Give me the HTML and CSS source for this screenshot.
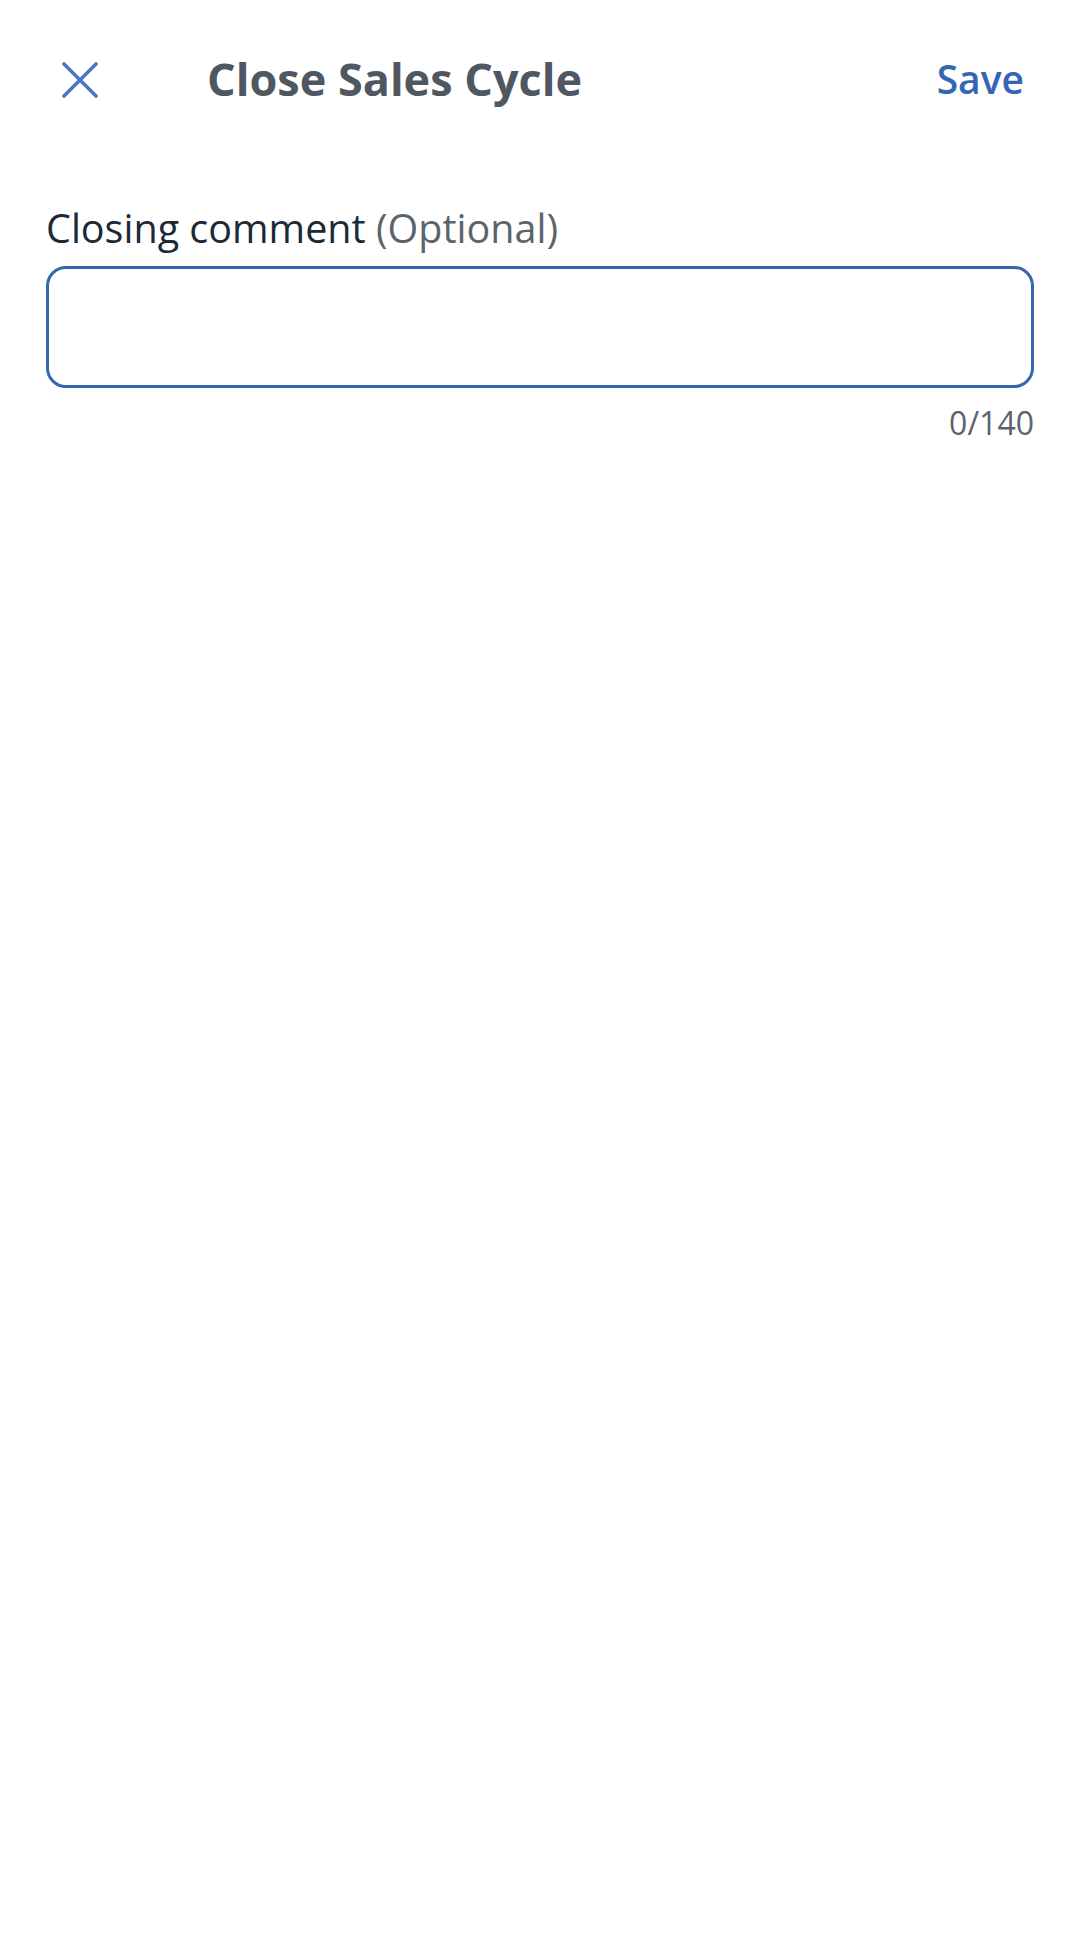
FILE: index.html
```html
<!DOCTYPE html>
<html>
<head>
<meta charset="utf-8">
<link rel="stylesheet" href="styles.css">
</head>
<body>
<div class="screen">
  <header class="topbar">
    <div class="close-btn">
      <svg width="36" height="36" viewBox="0 0 36 36"><path d="M2 2 L34 34 M34 2 L2 34" stroke="#4a78c2" stroke-width="3.6" stroke-linecap="round" fill="none"/></svg>
    </div>
    <div class="title">Close Sales Cycle</div>
    <div class="save">Save</div>
  </header>
  <main class="content">
    <div class="label"><span class="label-main">Closing comment</span> <span class="label-opt">(Optional)</span></div>
    <div class="input-box"></div>
    <div class="counter">0/140</div>
  </main>
</div>
</body>
</html>
```

FILE: styles.css
```css
html, body {
  margin: 0;
  padding: 0;
  background: #ffffff;
}
body {
  font-family: "Open Sans", "Noto Sans", sans-serif;
  width: 1080px;
  height: 1940px;
}
.topbar {
  height: 160px;
  display: flex;
  align-items: center;
  padding: 0 56px 0 62px;
}
.close-btn {
  width: 36px;
  height: 36px;
  display: flex;
}
.title {
  margin-left: 109px;
  font-size: 45px;
  font-weight: 700;
  color: #4f5861;
  flex: 1;
  margin-top: -4px;
}
.save {
  font-size: 39px;
  font-weight: 600;
  color: #3366b3;
  margin-top: -4px;
}
.content {
  padding: 0 46px;
}
.label {
  margin-top: 42px;
  font-size: 39.5px;
  line-height: 52px;
}
.label-main {
  color: #1b2a38;
}
.label-opt {
  color: #5b646c;
}
.input-box {
  margin-top: 12px;
  height: 116px;
  border: 3px solid #3567b1;
  border-radius: 20px;
}
.counter {
  margin-top: 13px;
  text-align: right;
  font-size: 32px;
  line-height: 44px;
  color: #5b646c;
}
```
